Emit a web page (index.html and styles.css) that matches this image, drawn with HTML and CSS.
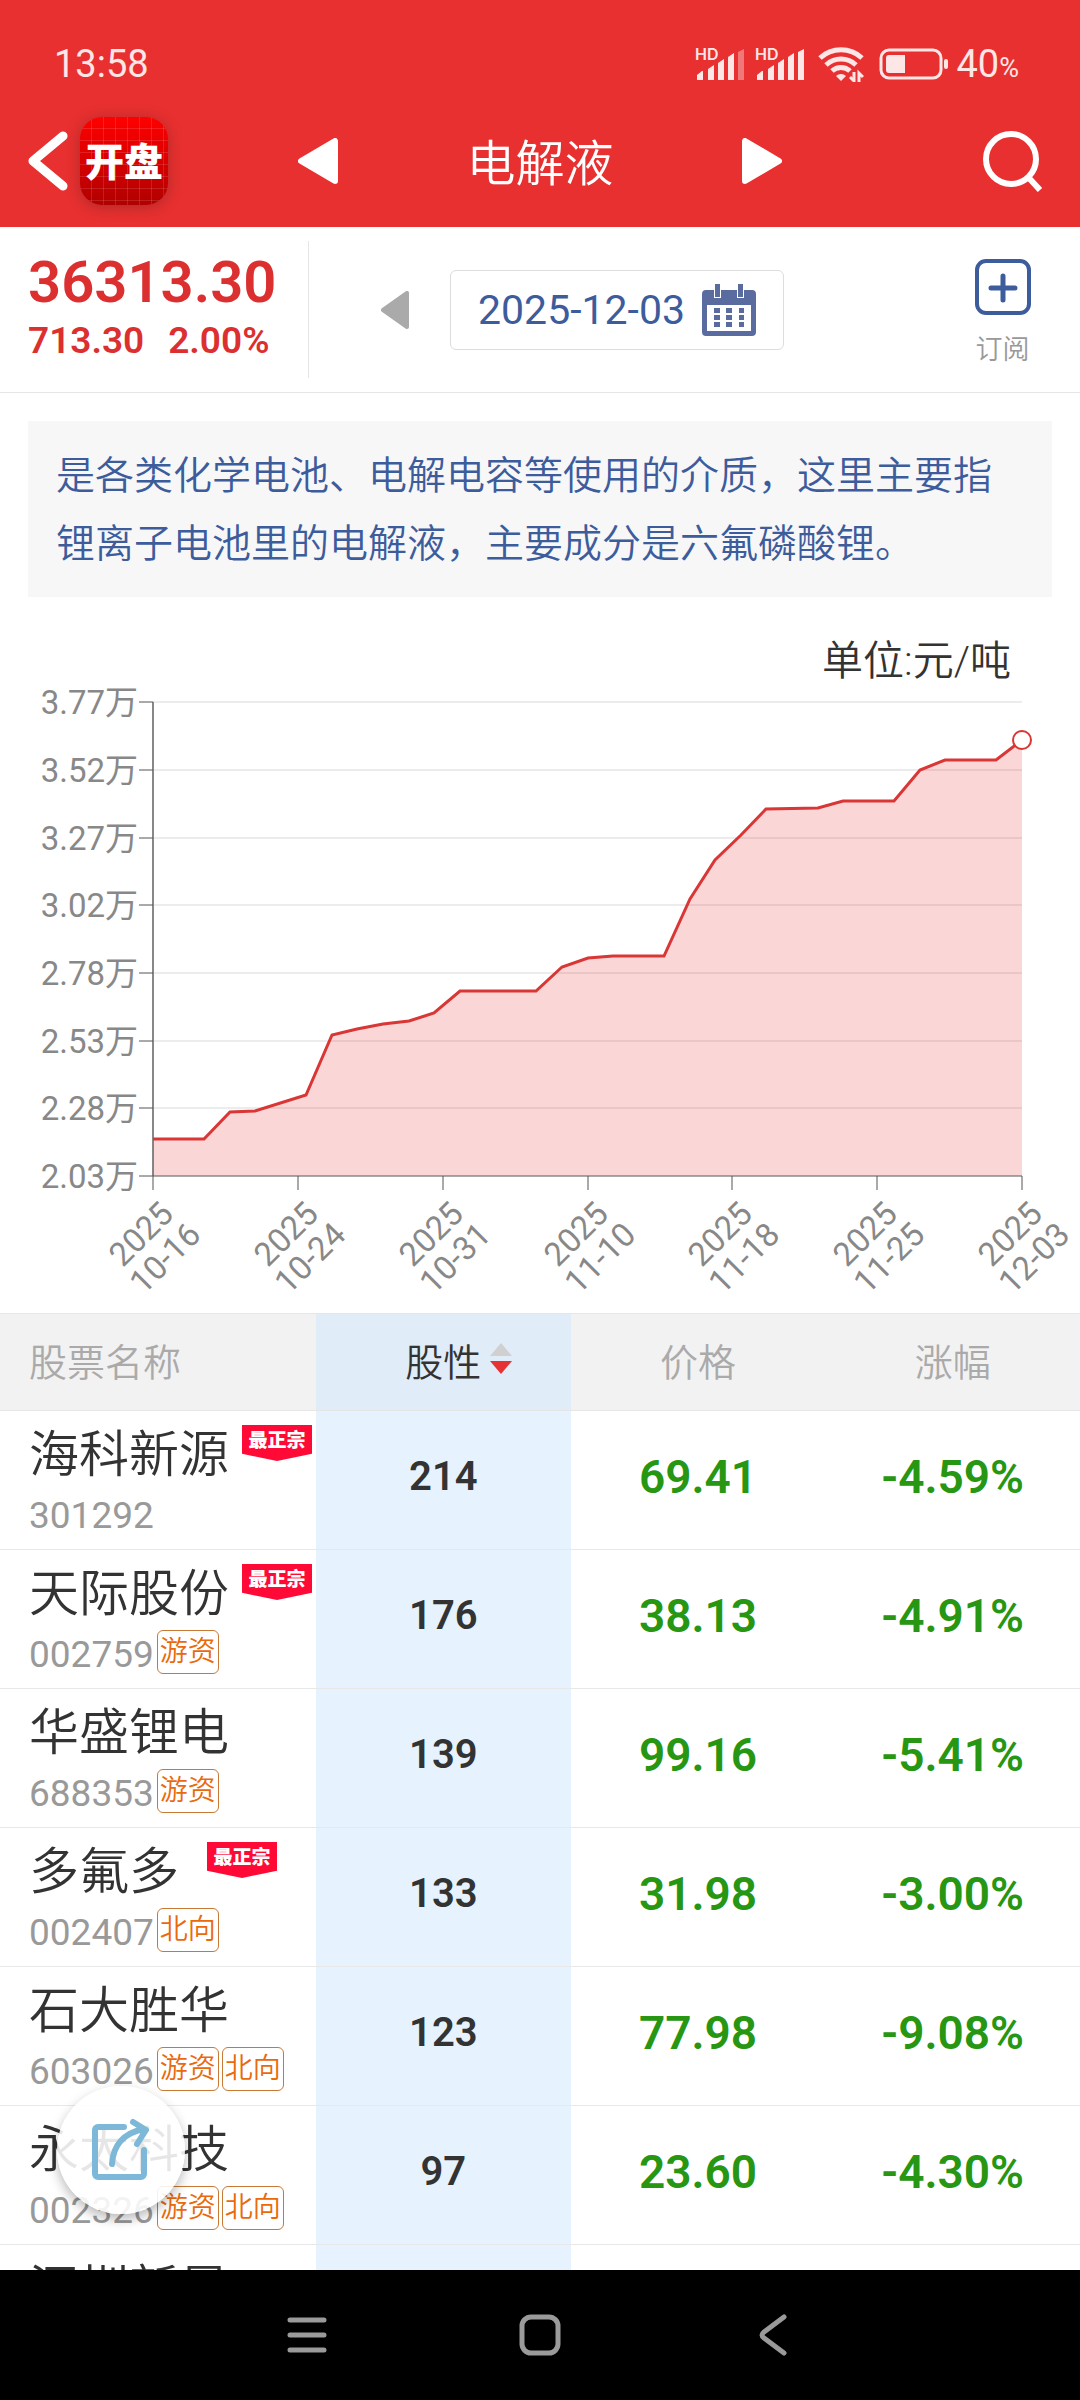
FILE: index.html
```html
<!DOCTYPE html>
<html lang="zh-CN">
<head>
  <meta charset="UTF-8" />
  <meta name="viewport" content="width=device-width, initial-scale=1.0" />
  <title>电解液</title>
  <link rel="stylesheet" href="styles.css">
</head>
<body>
  <header class="header">
    <div class="status-bar">
      <span>13:58</span>
      <div class="status-icons">
        <svg width="52" height="40" viewBox="0 -3 52 40" fill="currentColor">
          <text class="hd" x="0" y="13">HD</text>
          <path d="M2 33v-5l5-4h1v9zM13 33V22l6-4v15zM23 33V16l6-4v21zM33 33V10l6-4v27z" />
          <path opacity=".4" d="M43 33V5l6-3v31z" />
        </svg>
        <svg class="signal-2" width="52" height="40" viewBox="0 -3 52 40" fill="currentColor">
          <text class="hd" x="0" y="13">HD</text>
          <path d="M2 33v-5l5-4h1v9zM13 33V22l6-4v15zM23 33V16l6-4v21zM33 33V10l6-4v27zM43 33V5l6-3v31z" />
        </svg>
        <svg class="wifi" width="46" height="36" viewBox="0 0 46 36" fill="none" stroke="currentColor" stroke-width="5">
          <path d="M2 12a31 31 0 0 1 42 0" />
          <path d="M8 19a22 22 0 0 1 30 0" />
          <path d="M14 25a13 13 0 0 1 18 0" />
          <path d="M23 35l-5-5a7 7 0 0 1 10 0z" fill="currentColor" stroke="none" />
          <path d="M36 26v9l-4-4M41 36v-9l4 4" stroke-width="3" />
        </svg>
        <svg class="battery" width="70" height="32" viewBox="0 0 70 32" fill="currentColor">
          <rect x="2" y="2" width="60" height="28" rx="8" fill="none" stroke="currentColor" stroke-width="3" />
          <path d="M10 7h16v18H10a3 3 0 0 1-3-3V10a3 3 0 0 1 3-3z" />
          <rect x="65" y="11" width="4" height="10" rx="2" />
        </svg>
        <span>40<small>%</small></span>
      </div>
    </div>

    <nav class="navbar">
      <div class="nav-left">
        <button class="icon-btn" aria-label="返回">
          <svg width="40" height="60" viewBox="0 0 40 60" fill="none" stroke="#fff" stroke-width="9" stroke-linecap="round" stroke-linejoin="round"><path d="M35 5L5 30l30 25" /></svg>
        </button>
        <a class="logo" href="#">开盘</a>
      </div>
      <div class="nav-center">
        <button class="icon-btn" aria-label="上一个">
          <svg width="40" height="46" viewBox="0 0 40 46" fill="#fff" stroke="#fff" stroke-width="6" stroke-linejoin="round"><path d="M37 3v40L3 23z" /></svg>
        </button>
        <h1>电解液</h1>
        <button class="icon-btn" aria-label="下一个">
          <svg width="40" height="46" viewBox="0 0 40 46" fill="#fff" stroke="#fff" stroke-width="6" stroke-linejoin="round"><path d="M3 3v40l34-20z" /></svg>
        </button>
      </div>
      <div class="nav-right">
        <button class="icon-btn" aria-label="搜索">
          <svg width="70" height="62" viewBox="0 0 70 62" fill="none" stroke="#fff" stroke-width="6"><circle cx="29" cy="29" r="25" /><path d="M46 47l12 13" /></svg>
        </button>
      </div>
    </nav>
  </header>

  <main class="content">
    <section class="summary">
      <div class="price">
        <strong>36313.30</strong>
        <div class="change"><span>713.30</span><span>2.00%</span></div>
      </div>
      <div class="date-picker">
        <button class="icon-btn" aria-label="前一天">
          <svg width="28" height="38" viewBox="0 0 28 38" fill="#aaa" stroke="#aaa" stroke-width="4" stroke-linejoin="round"><path d="M26 2v34L2 19z" /></svg>
        </button>
        <button class="date-btn">
          2025-12-03
          <svg width="54" height="52" viewBox="0 0 54 52" fill="#5a6ba0">
            <path fill-rule="evenodd" d="M4 6h8v8h7V6h16v8h7V6h8a4 4 0 0 1 4 4v38a4 4 0 0 1-4 4H4a4 4 0 0 1-4-4V10a4 4 0 0 1 4-4zM5 21v26h44V21z" />
            <path d="M13 0h5v13h-5zM36 0h5v13h-5z" />
            <path d="M12 24h6v5h-6zM24 24h6v5h-6zM37 24h5v5h-5zM12 31h6v5h-6zM24 31h6v5h-6zM37 31h5v5h-5zM12 38h6v5h-6zM24 38h6v5h-6zM37 38h5v5h-5z" />
          </svg>
        </button>
      </div>
      <button class="subscribe">
        <svg width="56" height="56" viewBox="0 0 56 56" fill="none" stroke="#3d5c9c" stroke-width="4"><rect x="2" y="2" width="52" height="52" rx="9" /><path d="M28 17v24M16 29h24" stroke-width="5" stroke-linecap="round" /></svg>
        订阅
      </button>
    </section>

    <p class="intro">是各类化学电池、电解电容等使用的介质，这里主要指锂离子电池里的电解液，主要成分是六氟磷酸锂。</p>

    <svg class="chart" viewBox="0 0 1080 716">
      <text class="unit" x="1011" y="78">单位:元/吨</text>
      <path class="grid" d="M153 105h869M153 173h869M153 241h869M153 308h869M153 376h869M153 444h869M153 511h869" />
      <path class="axis-y" d="M153 105v474" />
      <path class="ticks" d="M139 105h14M139 173h14M139 241h14M139 308h14M139 376h14M139 444h14M139 511h14M139 579h883M153 579v14M298 579v14M443 579v14M588 579v14M732 579v14M877 579v14M1022 579v14" />
      <path class="area" d="M153 542H204L230 515 255 514 306 498 332 438 357 432 383 427 409 424 434 416 460 394H536L562 370 588 361 613 359H664L690 302 715 263 741 238 766 212 818 211 843 204H894L920 173 945 163H996L1022 143V579H153z" />
      <path class="line" d="M153 542H204L230 515 255 514 306 498 332 438 357 432 383 427 409 424 434 416 460 394H536L562 370 588 361 613 359H664L690 302 715 263 741 238 766 212 818 211 843 204H894L920 173 945 163H996L1022 143" />
      <circle class="dot" cx="1022" cy="143" r="9" />
      <g class="label-y">
        <text x="138" y="117">3.77万</text>
        <text x="138" y="185">3.52万</text>
        <text x="138" y="253">3.27万</text>
        <text x="138" y="320">3.02万</text>
        <text x="138" y="388">2.78万</text>
        <text x="138" y="456">2.53万</text>
        <text x="138" y="523">2.28万</text>
        <text x="138" y="591">2.03万</text>
      </g>
      <g class="label-x">
        <text transform="translate(149 645) rotate(-45)"><tspan x="0">2025</tspan><tspan x="0" dy="34">10-16</tspan></text>
        <text transform="translate(294 645) rotate(-45)"><tspan x="0">2025</tspan><tspan x="0" dy="34">10-24</tspan></text>
        <text transform="translate(439 645) rotate(-45)"><tspan x="0">2025</tspan><tspan x="0" dy="34">10-31</tspan></text>
        <text transform="translate(584 645) rotate(-45)"><tspan x="0">2025</tspan><tspan x="0" dy="34">11-10</tspan></text>
        <text transform="translate(728 645) rotate(-45)"><tspan x="0">2025</tspan><tspan x="0" dy="34">11-18</tspan></text>
        <text transform="translate(873 645) rotate(-45)"><tspan x="0">2025</tspan><tspan x="0" dy="34">11-25</tspan></text>
        <text transform="translate(1018 645) rotate(-45)"><tspan x="0">2025</tspan><tspan x="0" dy="34">12-03</tspan></text>
      </g>
    </svg>

    <table class="stocks">
      <thead>
        <tr>
          <th class="col-name">股票名称</th>
          <th class="col-hot">
            <button class="sort">股性
              <svg width="22" height="32" viewBox="0 0 22 32"><path fill="#d0d0d0" d="M11 0l11 13H0z" /><path fill="#e63232" d="M0 18h22L11 31z" /></svg>
            </button>
          </th>
          <th>价格</th>
          <th>涨幅</th>
        </tr>
      </thead>
      <tbody>
        <tr>
          <td class="col-name">
            <div class="name">海科新源<span class="badge">最正宗</span></div>
            <div class="code">301292</div>
          </td>
          <td class="col-hot">214</td>
          <td class="down">69.41</td>
          <td class="down">-4.59%</td>
        </tr>
        <tr>
          <td class="col-name">
            <div class="name">天际股份<span class="badge">最正宗</span></div>
            <div class="code">002759<span class="tag">游资</span></div>
          </td>
          <td class="col-hot">176</td>
          <td class="down">38.13</td>
          <td class="down">-4.91%</td>
        </tr>
        <tr>
          <td class="col-name">
            <div class="name">华盛锂电</div>
            <div class="code">688353<span class="tag">游资</span></div>
          </td>
          <td class="col-hot">139</td>
          <td class="down">99.16</td>
          <td class="down">-5.41%</td>
        </tr>
        <tr>
          <td class="col-name">
            <div class="name">多氟多<span class="badge">最正宗</span></div>
            <div class="code">002407<span class="tag">北向</span></div>
          </td>
          <td class="col-hot">133</td>
          <td class="down">31.98</td>
          <td class="down">-3.00%</td>
        </tr>
        <tr>
          <td class="col-name">
            <div class="name">石大胜华</div>
            <div class="code">603026<span class="tag">游资</span><span class="tag">北向</span></div>
          </td>
          <td class="col-hot">123</td>
          <td class="down">77.98</td>
          <td class="down">-9.08%</td>
        </tr>
        <tr>
          <td class="col-name">
            <div class="name">永太科技</div>
            <div class="code">002326<span class="tag">游资</span><span class="tag">北向</span></div>
          </td>
          <td class="col-hot">97</td>
          <td class="down">23.60</td>
          <td class="down">-4.30%</td>
        </tr>
        <tr>
          <td class="col-name"><div class="name">深圳新星</div></td>
          <td class="col-hot"></td>
          <td></td>
          <td></td>
        </tr>
      </tbody>
    </table>

    <button class="share" aria-label="分享">
      <svg width="62" height="66" viewBox="0 0 62 66" fill="none" stroke="#7db8d8" stroke-width="6" stroke-linecap="round" stroke-linejoin="round">
        <path d="M34 10H8a3 3 0 0 0-3 3v44a3 3 0 0 0 3 3h43a3 3 0 0 0 3-3V33" />
        <path d="M22 47C23 29 33 16 54 12M43 5l13 8-9 14" />
      </svg>
    </button>
  </main>

  <footer class="system-nav">
    <button class="icon-btn" aria-label="菜单">
      <svg width="48" height="48" viewBox="0 0 48 48" fill="none" stroke="#9a9a9a" stroke-width="5" stroke-linecap="round"><path d="M7 9h34M7 24h34M7 39h34" /></svg>
    </button>
    <button class="icon-btn" aria-label="主页">
      <svg width="48" height="48" viewBox="0 0 48 48" fill="none" stroke="#9a9a9a" stroke-width="5"><rect x="6" y="6" width="36" height="36" rx="9" /></svg>
    </button>
    <button class="icon-btn" aria-label="后退">
      <svg width="48" height="48" viewBox="0 0 48 48" fill="none" stroke="#9a9a9a" stroke-width="5" stroke-linecap="round" stroke-linejoin="round"><path d="M35 6L15 21q-4 3 0 6l20 15" /></svg>
    </button>
  </footer>
</body>
</html>
```
FILE: styles.css
```css
* {
  box-sizing: border-box;
}
body {
  margin: 0;
  height: 100vh;
  display: flex;
  flex-direction: column;
  overflow: hidden;
  background: #fff;
  color: #333;
  font-family: Roboto, "Noto Sans CJK SC", sans-serif;
  font-weight: 350;
}
svg {
  display: block;
  flex: none;
}
button {
  padding: 0;
  border: none;
  background: none;
  color: inherit;
  font: inherit;
  cursor: pointer;
}

/* header */
.header {
  flex: none;
  background: #e83030;
  color: #fff;
}
.status-bar {
  height: 100px;
  padding: 27px 61px 0 54px;
  display: flex;
  align-items: center;
  justify-content: space-between;
  color: #fde6e6;
  font-size: 38px;
  font-weight: 400;
}
.status-icons {
  display: flex;
  align-items: center;
}
.status-icons small {
  font-size: 27px;
}
.hd {
  font: 600 16px Inter, sans-serif;
}
.signal-2 {
  margin-left: 8px;
}
.wifi {
  margin-left: 11px;
}
.battery {
  margin: 0 8px 0 15px;
}
.navbar {
  height: 127px;
  padding: 0 28px 5px;
  display: grid;
  grid-template-columns: 1fr 484px 1fr;
  align-items: center;
}
.nav-left {
  display: flex;
  align-items: center;
  gap: 12px;
}
.nav-center {
  display: flex;
  align-items: center;
  justify-content: space-between;
}
.nav-right {
  display: flex;
  justify-content: flex-end;
}
.navbar h1 {
  margin: 0;
  padding-bottom: 4px;
  font-size: 49px;
  font-weight: 350;
}
.logo {
  width: 88px;
  height: 88px;
  display: flex;
  align-items: center;
  justify-content: center;
  padding-bottom: 4px;
  border-radius: 22px;
  background:
    repeating-linear-gradient(90deg, transparent 0 11px, rgba(255, 255, 255, 0.12) 11px 12px),
    repeating-linear-gradient(transparent 0 11px, rgba(255, 255, 255, 0.12) 11px 12px),
    linear-gradient(#ff0000, #b00000);
  box-shadow: 0 2px 14px rgba(90, 30, 30, 0.4);
  color: #fff;
  font-size: 39px;
  font-weight: 900;
  text-decoration: none;
}

/* summary */
.content {
  position: relative;
  flex: 1;
  min-height: 0;
  overflow: hidden;
}
.summary {
  height: 166px;
  display: flex;
  border-bottom: 1px solid #e6e6e6;
}
.price {
  width: 309px;
  margin: 14px 0;
  padding: 6px 0 0 28px;
  border-right: 1px solid #e6e6e6;
  color: #dc2f2f;
  font-weight: 600;
}
.price strong {
  display: block;
  font-size: 58px;
  font-weight: 600;
  line-height: 70px;
}
.change {
  display: flex;
  gap: 24px;
  font-size: 37px;
  line-height: 48px;
}
.date-picker {
  flex: 1;
  display: grid;
  grid-template-columns: 28px 334px 28px;
  gap: 41px;
  align-items: center;
  justify-content: center;
}
.date-btn {
  height: 80px;
  display: flex;
  align-items: center;
  justify-content: space-between;
  padding: 0 27px;
  border: 1px solid #ddd;
  border-radius: 6px;
  color: #3d5c9c;
  font-size: 41px;
  font-weight: 400;
}
.subscribe {
  width: 155px;
  display: flex;
  flex-direction: column;
  align-items: center;
  padding-top: 32px;
  gap: 15px;
  color: #999;
  font-size: 27px;
  line-height: 40px;
}
.intro {
  margin: 28px 28px 0;
  padding: 21px 28px 19px;
  background: #f7f7f8;
  color: #3d5c9c;
  font-size: 39px;
  line-height: 68px;
}

/* chart */
.chart {
  width: 100%;
}
.chart path {
  fill: none;
}
.unit {
  fill: #333;
  font-size: 41px;
  text-anchor: end;
}
.chart .grid {
  stroke: #ececec;
  stroke-width: 2;
}
.chart .axis-y {
  stroke: #888;
  stroke-width: 2;
}
.chart .ticks {
  stroke: #555;
}
.chart .area {
  fill: rgba(229, 50, 50, 0.2);
}
.chart .line {
  stroke: #d93636;
  stroke-width: 3;
}
.chart .dot {
  fill: #fff;
  stroke: #d93636;
  stroke-width: 2;
}
.label-y,
.label-x {
  fill: #888;
  font-size: 33px;
  font-weight: 400;
}
.label-y {
  text-anchor: end;
}
.label-x {
  text-anchor: middle;
}

/* table */
.stocks {
  width: 100%;
  table-layout: fixed;
  border-collapse: separate;
  border-spacing: 0;
}
.stocks th {
  height: 98px;
  padding: 0 0 6px;
  border-top: 1px solid #e6e6e6;
  border-bottom: 1px solid #e6e6e6;
  background: #f2f2f2;
  color: #aaa;
  font-size: 38px;
  font-weight: 350;
}
.stocks .col-name {
  width: 316px;
  padding-left: 29px;
  text-align: left;
}
.stocks th.col-hot {
  background: #e0ecf8;
  color: #333;
}
.sort {
  display: flex;
  align-items: center;
  justify-content: center;
  gap: 9px;
  width: 100%;
  padding-left: 31px;
}
.stocks td {
  height: 139px;
  padding: 0 0 7px;
  border-bottom: 1px solid #e8e8e8;
  text-align: center;
}
.stocks td.col-name {
  padding: 14px 4px 0 29px;
  vertical-align: top;
}
.stocks td.col-hot {
  background: #e6f3ff;
  font-size: 40px;
  font-weight: 600;
}
.stocks .down {
  color: #279612;
  font-size: 46px;
  font-weight: 600;
}
.name {
  display: flex;
  align-items: flex-start;
  font-size: 50px;
  line-height: 60px;
  white-space: nowrap;
}
.name::after {
  content: "";
  order: 1;
  flex: 0 1 28px;
}
.badge {
  order: 2;
  flex: none;
  width: 70px;
  height: 36px;
  background: #ff0a36;
  clip-path: polygon(0 0, 100% 0, 100% 80%, 50% 100%, 0 80%);
  color: #fff;
  font-size: 19px;
  font-weight: 900;
  line-height: 32px;
  text-align: center;
}
.code {
  display: flex;
  align-items: flex-start;
  gap: 3px;
  margin-top: 6px;
  color: #999;
  font-size: 37px;
  font-weight: 400;
  line-height: 50px;
}
.tag {
  height: 44px;
  padding: 0 2px;
  border: 1px solid #c87a35;
  border-radius: 6px;
  color: #e96a0c;
  font-size: 28px;
  font-weight: 350;
  line-height: 42px;
}

.share {
  position: absolute;
  left: 57px;
  bottom: 56px;
  width: 128px;
  height: 128px;
  display: flex;
  align-items: center;
  justify-content: center;
  border-radius: 50%;
  background: rgba(255, 255, 255, 0.88);
  box-shadow: 0 5px 12px rgba(0, 0, 0, 0.28);
}

.system-nav {
  flex: none;
  height: 130px;
  display: flex;
  align-items: center;
  justify-content: center;
  gap: 185px;
  background: #000;
}
```
